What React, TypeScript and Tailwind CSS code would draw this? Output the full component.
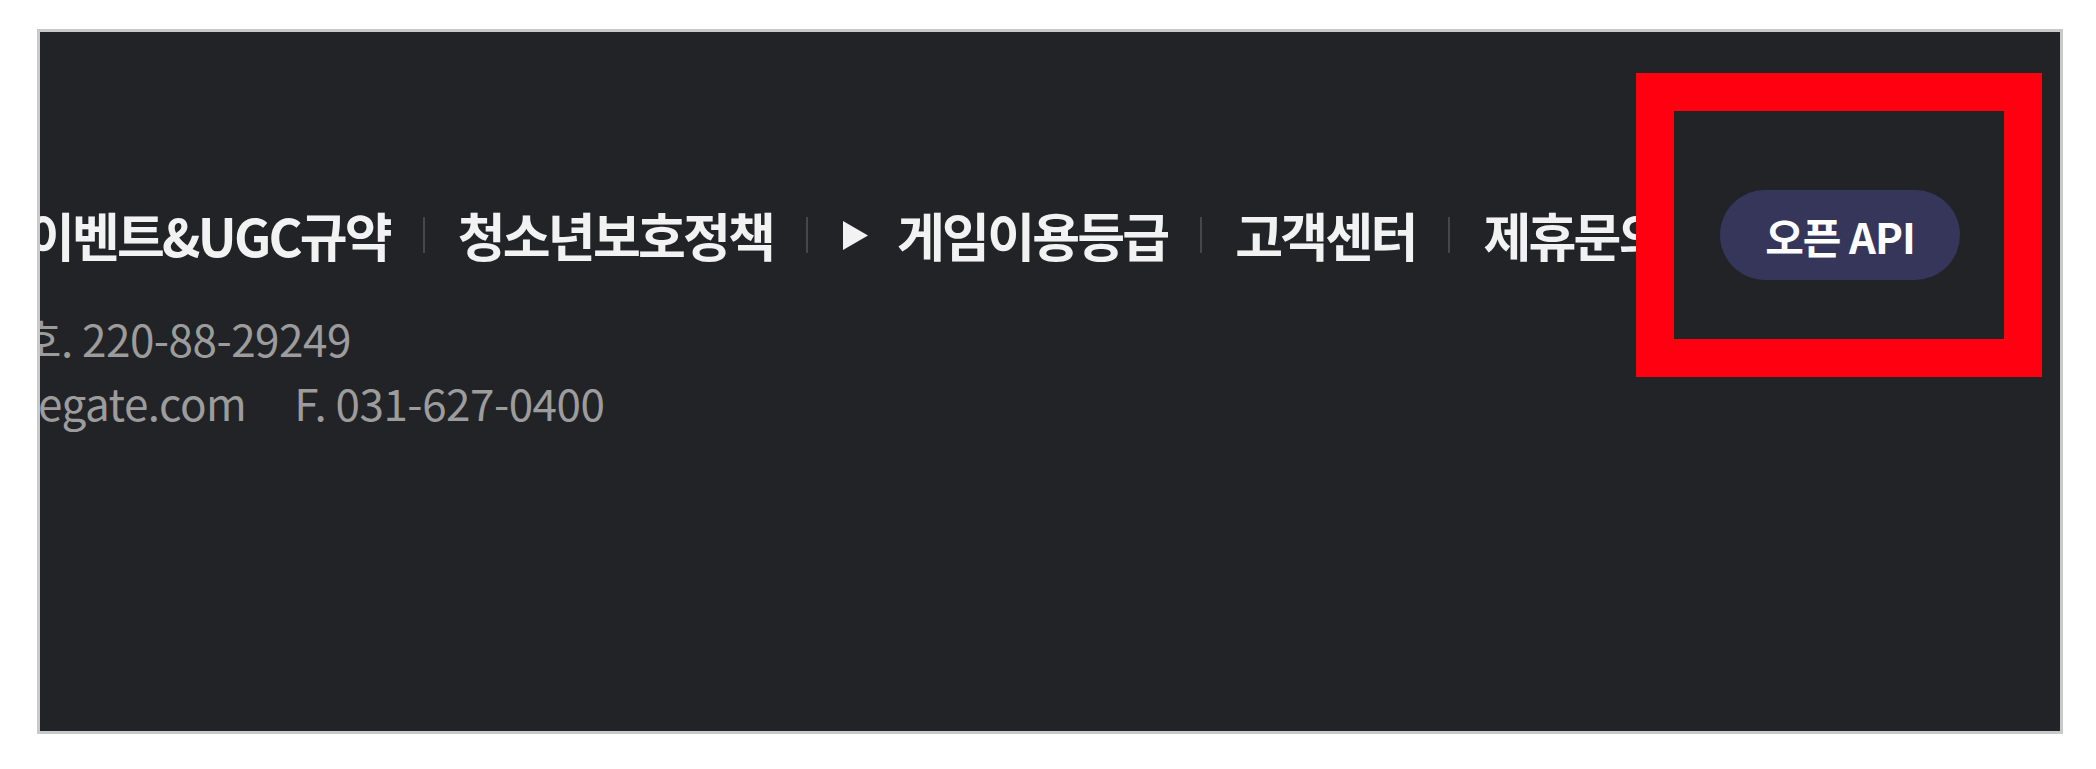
const links = ["이벤트&UGC규약", "청소년보호정책", "게임이용등급", "고객센터", "제휴문의"]

function Divider() {
  return <span className="mx-[33px] h-[36px] w-[2px] shrink-0 bg-[#46474c]" />
}

function Arrow() {
  return (
    <svg viewBox="0 0 28 31" className="mr-[28px] h-[31px] w-[28px] shrink-0">
      <polygon points="2,1 27,15.5 2,30" fill="#f2f2f2" />
    </svg>
  )
}

export default function App() {
  return (
    <div className="min-h-screen bg-white pl-[37px] pt-[29px] font-['Noto_Sans_CJK_KR','Noto_Sans',sans-serif]">
      <div className="relative h-[705px] w-[2026px] overflow-hidden border-[3px] border-[#c9c9cb] bg-[#222327]">
        {/* highlight box drawn over the footer */}
        <div className="absolute left-[1596px] top-[41px] z-[1] h-[304px] w-[406px] border-[38px] border-[#ff0010] bg-[#222327]" />

        <div className="flex items-center pr-[100px] pt-[158px]">
          <nav className="-ml-[13px] flex min-w-0 flex-1 items-center whitespace-nowrap text-[52px] font-bold leading-[90px] tracking-[-2.8px] text-[#f2f2f2]">
            {links.map((label, i) => (
              <span key={label} className="flex shrink-0 items-center">
                {i > 0 && <Divider />}
                {label === "게임이용등급" && <Arrow />}
                <a>{label}</a>
              </span>
            ))}
          </nav>
          <button className="relative z-[2] h-[90px] w-[240px] shrink-0 rounded-full bg-[#35365a] text-[42px] font-bold tracking-[-1px] text-white">
            오픈 API
          </button>
        </div>

        <div className="mt-[26px] whitespace-nowrap text-[44px] leading-[64px] tracking-[-0.5px] text-[#9c9c9c]">
          <p className="-ml-[19px]">호. 220-88-29249</p>
          <p className="-ml-[2px]">
            egate.com<span className="ml-[48px]">F. 031-627-0400</span>
          </p>
        </div>
      </div>
    </div>
  )
}
